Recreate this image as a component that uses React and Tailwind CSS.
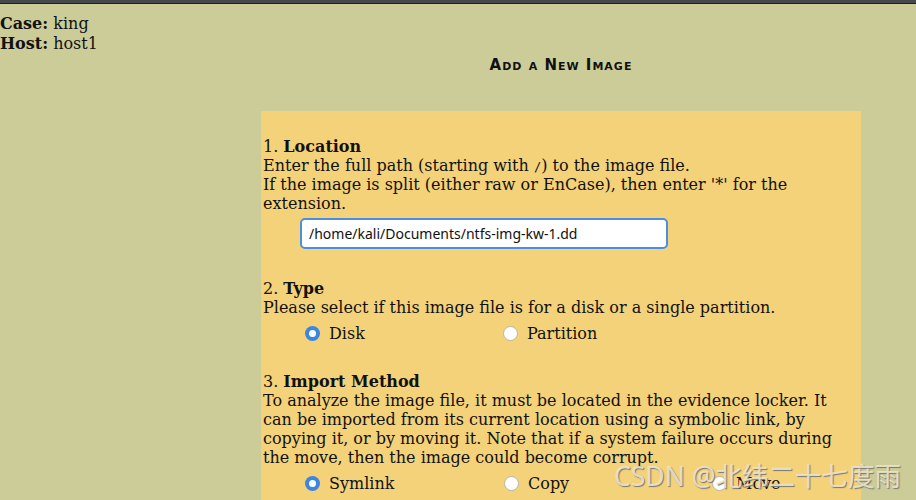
import React from "react";

const serif = "font-['DejaVu_Serif',serif]";

const Radio = ({ checked, label, className }) => (
  <label className={`flex items-center ${className}`}>
    {checked ? (
      <span className="flex h-[15px] w-[15px] items-center justify-center rounded-full bg-[#3b86e0]">
        <span className="h-[7px] w-[7px] rounded-full bg-white" />
      </span>
    ) : (
      <span className="h-[15px] w-[15px] rounded-full border border-[#b9b4a6] bg-white" />
    )}
    <span className="ml-[9px]">{label}</span>
  </label>
);

const Heading = ({ n, children }) => (
  <div>
    {n}. <b>{children}</b>
  </div>
);

export default function App() {
  return (
    <div className={`relative h-[500px] w-[916px] overflow-hidden bg-[#cccc99] text-[16px] leading-[19px] text-[#111] ${serif}`}>
      <div className="h-[4px] border-b border-[#1f2024] bg-[#45484f]" />

      <div className="pt-[10px] leading-[19.5px]">
        <div><b>Case:</b> king</div>
        <div><b>Host:</b> host1</div>
      </div>

      <div className="ml-[261px] w-[600px]">
        <div className="mt-[3px] text-center font-['DejaVu_Sans',sans-serif] text-[15px] font-bold leading-[18px] tracking-[1px] [font-variant:small-caps]">
          Add a New Image
        </div>

        <div className="mt-[37px] h-[400px] bg-[#f4d27a] pl-[2px] pr-[20px] pt-[26px]">
          <Heading n={1}>Location</Heading>
          <div>
            Enter the full path (starting with{" "}
            <span className="font-['DejaVu_Sans_Mono',monospace] text-[12px] leading-none">/</span>) to the image file.
          </div>
          <div>If the image is split (either raw or EnCase), then enter '*' for the extension.</div>
          <input
            defaultValue="/home/kali/Documents/ntfs-img-kw-1.dd"
            className="ml-[37px] mt-[5px] h-[31px] w-[368px] rounded-[5px] border-2 border-[#4a90e2] bg-white pl-[7px] font-['Noto_Sans',sans-serif] text-[14px] text-[#111] outline-none"
          />

          <div className="mt-[30px]">
            <Heading n={2}>Type</Heading>
            <div>Please select if this image file is for a disk or a single partition.</div>
            <div className="ml-[42px] mt-[7px] flex">
              <Radio checked label="Disk" className="w-[198px]" />
              <Radio label="Partition" />
            </div>
          </div>

          <div className="mt-[29px]">
            <Heading n={3}>Import Method</Heading>
            <div>
              To analyze the image file, it must be located in the evidence locker. It can be imported from its current
              location using a symbolic link, by copying it, or by moving it. Note that if a system failure occurs during
              the move, then the image could become corrupt.
            </div>
            <div className="ml-[42px] mt-[7px] flex">
              <Radio checked label="Symlink" className="w-[199px]" />
              <Radio label="Copy" className="w-[208px]" />
              <Radio label="Move" />
            </div>
          </div>
        </div>
      </div>

      <div className="absolute left-[614px] top-[461px] font-['Noto_Sans','Noto_Sans_CJK_SC',sans-serif] text-[26.5px] leading-[30px] text-[#efe6cc]/90 [text-shadow:1px_1px_1px_#777]">
        CSDN @北纬二十七度雨
      </div>
    </div>
  );
}
